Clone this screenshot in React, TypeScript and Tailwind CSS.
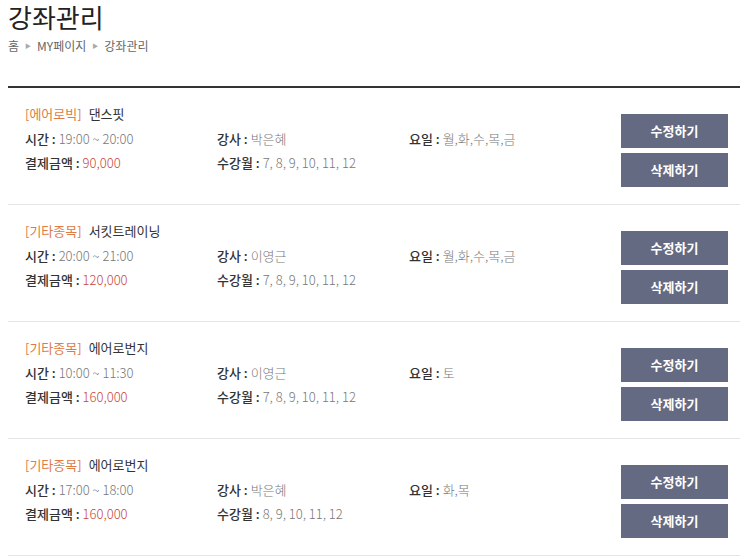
import React from 'react';

type Course = {
  category: string;
  name: string;
  time: string;
  teacher: string;
  days: string;
  price: string;
  months: string;
};

const courses: Course[] = [
  { category: '[에어로빅]', name: '댄스핏', time: '19:00 ~ 20:00', teacher: '박은혜', days: '월,화,수,목,금', price: '90,000', months: '7, 8, 9, 10, 11, 12' },
  { category: '[기타종목]', name: '서킷트레이닝', time: '20:00 ~ 21:00', teacher: '이영근', days: '월,화,수,목,금', price: '120,000', months: '7, 8, 9, 10, 11, 12' },
  { category: '[기타종목]', name: '에어로번지', time: '10:00 ~ 11:30', teacher: '이영근', days: '토', price: '160,000', months: '7, 8, 9, 10, 11, 12' },
  { category: '[기타종목]', name: '에어로번지', time: '17:00 ~ 18:00', teacher: '박은혜', days: '화,목', price: '160,000', months: '8, 9, 10, 11, 12' },
];

const Field: React.FC<{ label: string; value: string; valueClass?: string }> = ({ label, value, valueClass }) => (
  <div className="w-[192px] whitespace-nowrap">
    <span className="text-[#333] font-medium">{label} : </span>
    <span className={valueClass ?? 'text-[#777] font-light'}>{value}</span>
  </div>
);

const Sep: React.FC = () => <span className="text-[6px] leading-none text-[#aaa]">▶</span>;

const App: React.FC = () => {
  return (
    <div className="w-[740px] h-[557px] bg-white overflow-hidden pl-2" style={{ fontFamily: '"Noto Sans CJK KR", "Noto Sans", sans-serif' }}>
      {/* Header */}
      <h1 className="text-[26px] leading-[34px] text-[#222] font-normal">강좌관리</h1>
      <div className="mt-[3px] flex items-center gap-[6px] text-[12px] leading-[18px] text-[#666]">
        <span>홈</span>
        <Sep />
        <span>MY페이지</span>
        <Sep />
        <span>강좌관리</span>
      </div>

      <div className="mt-[31px] border-t-2 border-[#333]">
        {courses.map((c, i) => (
          <div key={i} className="h-[117px] flex border-b border-[#e5e5e5]">
            <div className="flex-1 pl-[17px] pt-[14px] text-[13px] leading-[24.5px]">
              <div>
                <span className="text-[#e07b45]">{c.category}</span>
                <span className="ml-[7px] text-[#333]">{c.name}</span>
              </div>
              <div className="flex">
                <Field label="시간" value={c.time} />
                <Field label="강사" value={c.teacher} />
                <Field label="요일" value={c.days} />
              </div>
              <div className="flex">
                <Field label="결제금액" value={c.price} valueClass="text-[#c9463d] font-light" />
                <Field label="수강월" value={c.months} />
              </div>
            </div>
            <div className="pr-[12px] pt-[26px] flex flex-col gap-[5px]">
              <button className="w-[107px] h-[34px] bg-[#636a82] text-white text-[13px] font-bold">수정하기</button>
              <button className="w-[107px] h-[34px] bg-[#636a82] text-white text-[13px] font-bold">삭제하기</button>
            </div>
          </div>
        ))}
      </div>
    </div>
  );
};

export default App;
